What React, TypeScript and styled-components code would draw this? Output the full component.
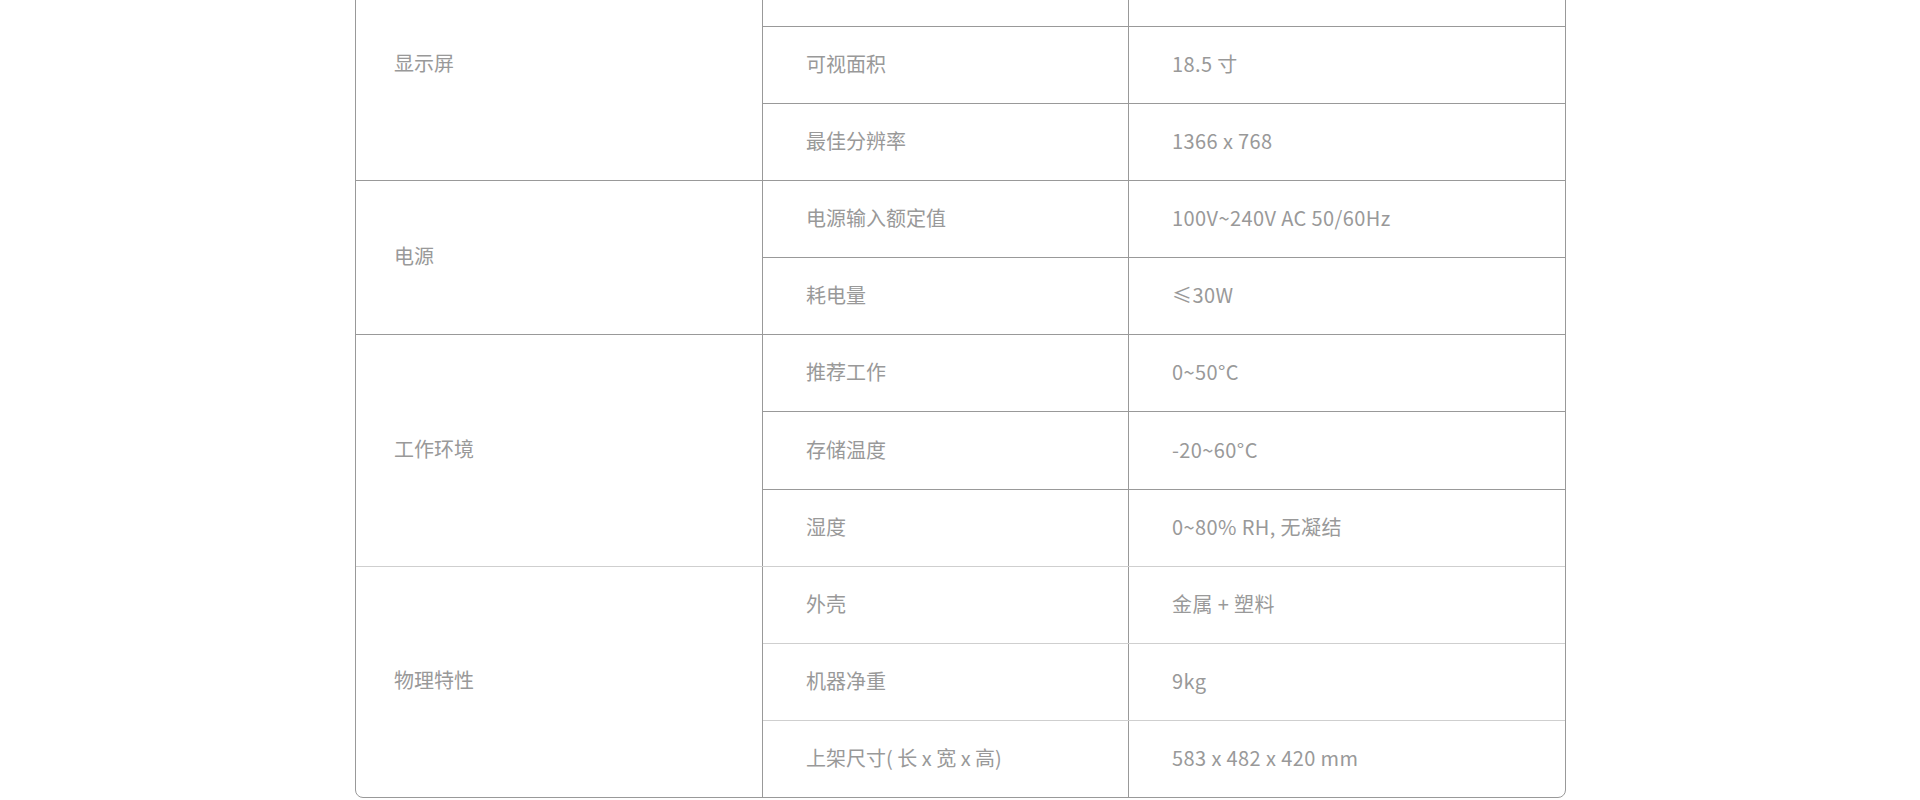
import React from "react";
import styled, { createGlobalStyle } from "styled-components";

const GlobalStyle = createGlobalStyle`
  body {
    margin: 0;
    background: #fff;
    font-family: "Noto Sans CJK SC", "Noto Sans", sans-serif;
  }
`;

interface SpecItem {
  name: string;
  value: string;
}

interface SpecGroup {
  title: string;
  light?: boolean;
  items: SpecItem[];
}

const specs: SpecGroup[] = [
  {
    title: "显示屏",
    items: [
      { name: "屏幕类型", value: "液晶屏幕 (LED 背光显示)" },
      { name: "可视面积", value: "18.5 寸" },
      { name: "最佳分辨率", value: "1366 x 768" },
    ],
  },
  {
    title: "电源",
    items: [
      { name: "电源输入额定值", value: "100V~240V AC 50/60Hz" },
      { name: "耗电量", value: "≤30W" },
    ],
  },
  {
    title: "工作环境",
    items: [
      { name: "推荐工作", value: "0~50°C" },
      { name: "存储温度", value: "-20~60°C" },
      { name: "湿度", value: "0~80% RH, 无凝结" },
    ],
  },
  {
    title: "物理特性",
    light: true,
    items: [
      { name: "外壳", value: "金属 + 塑料" },
      { name: "机器净重", value: "9kg" },
      { name: "上架尺寸( 长 x 宽 x 高)", value: "583 x 482 x 420 mm" },
    ],
  },
];

const Page = styled.div`
  height: 800px;
  overflow: hidden;
`;

const SpecTable = styled.div`
  box-sizing: border-box;
  width: 1211px;
  margin: -52.1px 0 0 355px;
  border: 1px solid #999;
  border-radius: 8px;
  color: #999;
  font-size: 20px;
  line-height: 1.5;
`;

const Group = styled.div<{ $light?: boolean; $first?: boolean }>`
  display: grid;
  grid-template-columns: 407px 1fr;
  border-top: ${(p) =>
    p.$first ? "none" : `1px solid ${p.$light ? "#cfcfcf" : "#999"}`};
`;

const GroupTitle = styled.div`
  box-sizing: border-box;
  display: flex;
  align-items: center;
  padding: 0 0 3px 38px;
  border-right: 1px solid #999;
`;

const ItemList = styled.div`
  display: flex;
  flex-direction: column;
`;

const ItemRow = styled.div<{ $light?: boolean; $first?: boolean; $short?: boolean }>`
  box-sizing: border-box;
  display: grid;
  grid-template-columns: 366px 1fr;
  height: ${(p) => (p.$short ? "76.1px" : "77.1px")};
  border-top: ${(p) =>
    p.$first ? "none" : `1px solid ${p.$light ? "#cfcfcf" : "#999"}`};
`;

const NameCell = styled.div`
  box-sizing: border-box;
  display: flex;
  align-items: center;
  padding: 0 0 2px 43px;
  white-space: nowrap;
  border-right: 1px solid #999;
`;

const ValueCell = styled.div`
  box-sizing: border-box;
  display: flex;
  align-items: center;
  padding: 0 0 2px 43px;
  white-space: nowrap;
  letter-spacing: 0.4px;
`;

export default function App() {
  return (
    <Page>
      <GlobalStyle />
      <SpecTable>
        {specs.map((group, gi) => (
          <Group key={group.title} $first={gi === 0} $light={group.light}>
            <GroupTitle>{group.title}</GroupTitle>
            <ItemList>
              {group.items.map((item, ii) => (
                <ItemRow
                  key={item.name}
                  $first={ii === 0}
                  $short={ii === 0 && gi !== 0}
                  $light={group.light}
                >
                  <NameCell>{item.name}</NameCell>
                  <ValueCell>{item.value}</ValueCell>
                </ItemRow>
              ))}
            </ItemList>
          </Group>
        ))}
      </SpecTable>
    </Page>
  );
}
